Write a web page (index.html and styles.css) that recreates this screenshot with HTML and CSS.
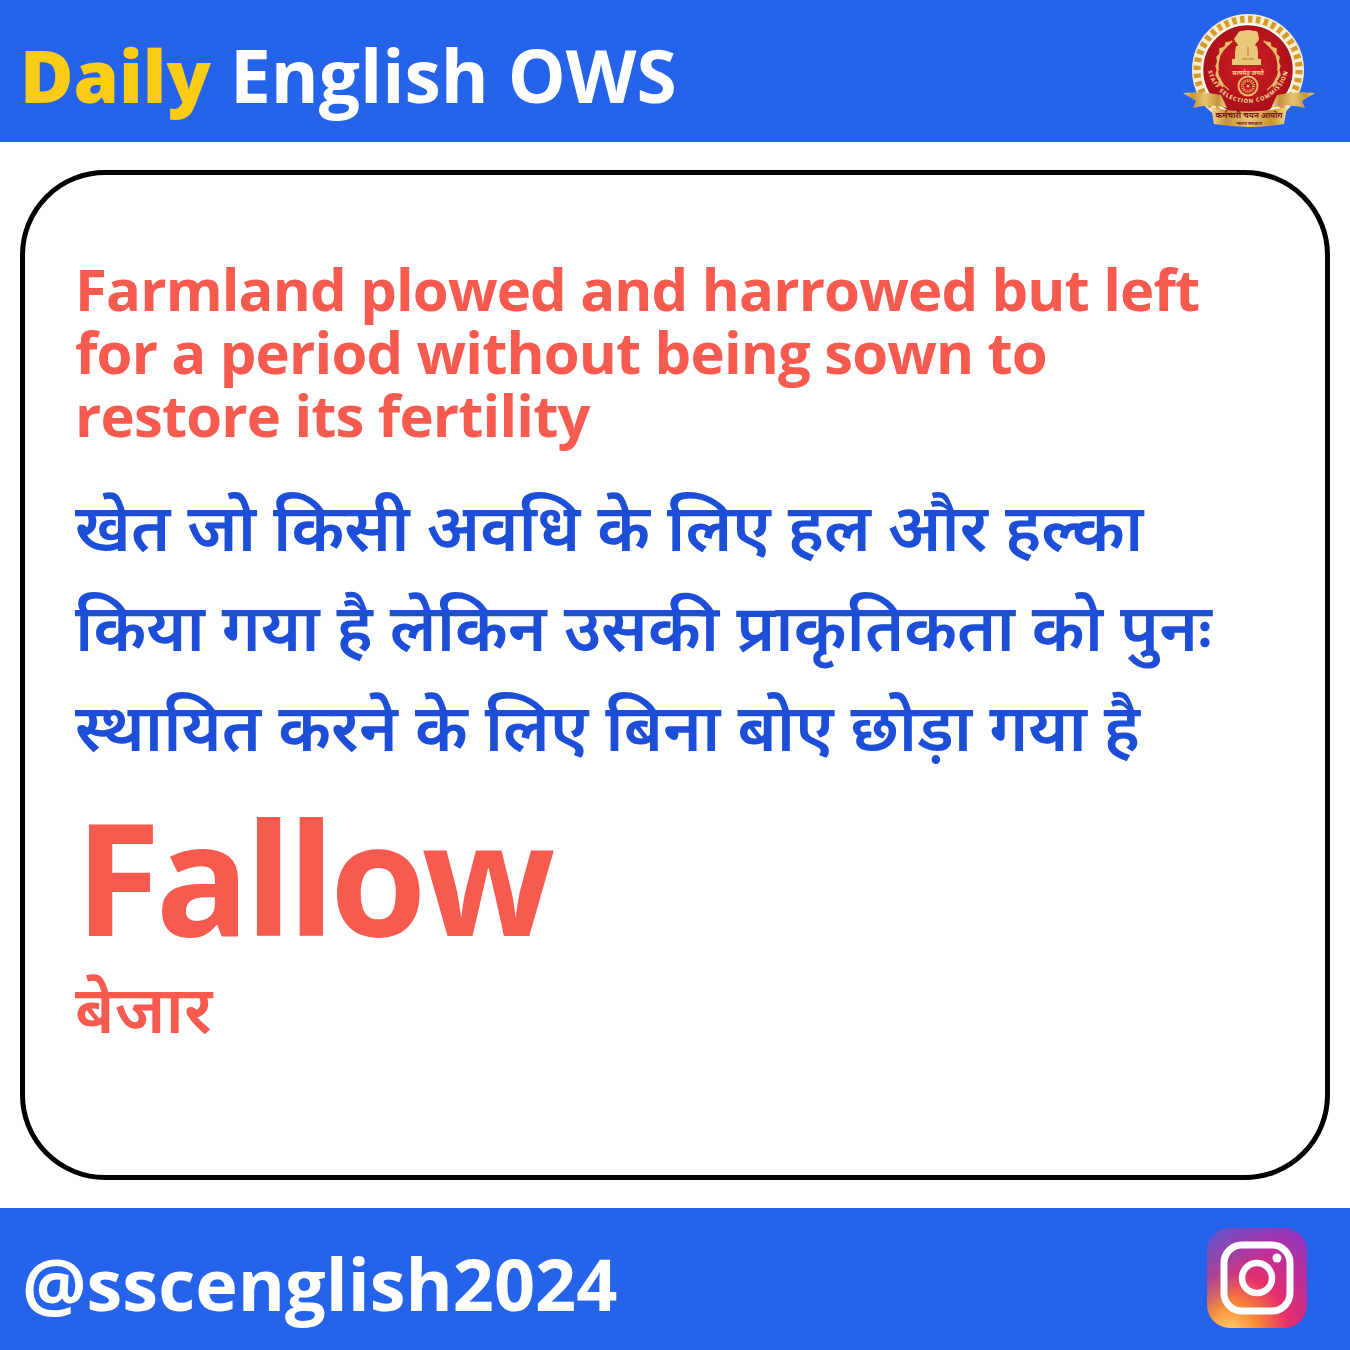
FILE: index.html
```html
<!DOCTYPE html>
<html>
<head>
  <title>Daily English OWS</title>
  <link rel="stylesheet" href="styles.css">
</head>
<body>
  <div class="page">
    <div class="bar top-bar">
      <div class="heading"><span class="yellow">Daily</span> English OWS</div>
      <svg class="emblem" viewBox="0 0 160 142" width="160" height="142">
        <defs>
          <linearGradient id="ribbonGold" x1="0" y1="0" x2="1" y2="0">
            <stop offset="0" stop-color="#f3d88e"/>
            <stop offset="0.2" stop-color="#c4933a"/>
            <stop offset="0.5" stop-color="#e6c474"/>
            <stop offset="0.8" stop-color="#c4933a"/>
            <stop offset="1" stop-color="#f3d88e"/>
          </linearGradient>
          <radialGradient id="discRed" cx="0.5" cy="0.45" r="0.55">
            <stop offset="0" stop-color="#d01f26"/>
            <stop offset="1" stop-color="#a80f18"/>
          </radialGradient>
          <path id="textArc" d="M 37 62 A 41 41 0 0 0 119 62" fill="none"/>
        </defs>
        <!-- anneau blanc et triangles dores -->
        <circle cx="78" cy="70" r="56" fill="#f8eecf"/>
        <circle cx="78" cy="70" r="51" fill="none" stroke="#d59a2c" stroke-width="7" stroke-dasharray="4.4 3.6"/>
        <circle cx="78" cy="70" r="45.5" fill="url(#discRed)" stroke="#fff" stroke-width="1.5"/>
        <!-- chapiteau -->
        <path d="M68 33q2-3 5-2q5-2 10 0q3-1 5 2l1 6q-1 3-3 4l-1 3h2l1 6v7h3v6h-29v-6h3v-7l1-6h2l-1-3q-2-1-3-4z" fill="#e9c878"/>
        <path d="M72 59h12M78 47v9" stroke="#a87a2c" stroke-width="1"/>
        <text class="motto" x="78" y="75" text-anchor="middle">सत्यमेव जयते</text>
        <!-- couronne -->
        <path d="M62 41q-15 10-15 26q0 14 12 23M94 41q15 10 15 26q0 14-12 23" fill="none" stroke="#e3bd68" stroke-width="1.2"/>
        <path d="M61 42l-5 1-1 5zM55 47l-5 2 0 6zM50 54l-3 3 1 6zM48 62l-2 4 2 5zM47 71l-1 4 3 5zM50 79l-1 4 4 4z" fill="#e3bd68" stroke="#e3bd68" stroke-width="1.5"/>
        <path d="M95 42l5 1 1 5zM101 47l5 2 0 6zM106 54l3 3-1 6zM108 62l2 4-2 5zM109 71l1 4-3 5zM106 79l1 4-4 4z" fill="#e3bd68" stroke="#e3bd68" stroke-width="1.5"/>
        <!-- roue -->
        <circle cx="78" cy="86" r="9.5" fill="#c3161e" stroke="#e3bd68" stroke-width="2"/>
        <circle cx="78" cy="86" r="5.5" fill="none" stroke="#e3bd68" stroke-width="3" stroke-dasharray="1 1"/>
        <circle cx="78" cy="86" r="1.5" fill="#e3bd68"/>
        <text class="arc-text"><textPath href="#textArc" startOffset="50%" text-anchor="middle">STAFF SELECTION COMMISSION</textPath></text>
        <!-- ruban -->
        <path d="M13 93q20-2 38 2l6 13q-18-5-34 0l3-7z" fill="url(#ribbonGold)"/>
        <path d="M145 93q-20-2-38 2l-6 13q18-5 34 0l-3-7z" fill="url(#ribbonGold)"/>
        <path d="M41 107q38 9 76 0l-3 17q-35 6-70 0z" fill="url(#ribbonGold)"/>
        <text class="ribbon-big" x="79" y="118" text-anchor="middle">कर्मचारी चयन आयोग</text>
        <text class="ribbon-small" x="79" y="124.5" text-anchor="middle">भारत सरकार</text>
      </svg>
    </div>

    <div class="main">
      <div class="card">
        <p class="meaning-en">Farmland plowed and harrowed but left for a period without being sown to restore its fertility</p>
        <p class="meaning-hi">खेत जो किसी अवधि के लिए हल और हल्का किया गया है लेकिन उसकी प्राकृतिकता को पुनः स्थायित करने के लिए बिना बोए छोड़ा गया है</p>
        <div class="word">Fallow</div>
        <div class="word-hi">बेजार</div>
      </div>
    </div>

    <div class="bar bottom-bar">
      <div class="handle">@sscenglish2024</div>
      <svg class="insta" viewBox="0 0 100 100" width="100" height="100">
        <defs>
          <radialGradient id="instaGrad" cx="0.22" cy="1.05" r="1.15">
            <stop offset="0" stop-color="#fed373"/>
            <stop offset="0.25" stop-color="#f98a35"/>
            <stop offset="0.52" stop-color="#e52e6c"/>
            <stop offset="0.78" stop-color="#c02d98"/>
            <stop offset="1" stop-color="#9a35b8"/>
          </radialGradient>
          <linearGradient id="instaTop" x1="0" y1="0" x2="0.5" y2="0.4">
            <stop offset="0" stop-color="#4a62d8" stop-opacity="0.8"/>
            <stop offset="1" stop-color="#4a62d8" stop-opacity="0"/>
          </linearGradient>
        </defs>
        <rect width="100" height="100" rx="23" fill="url(#instaGrad)"/>
        <rect width="100" height="100" rx="23" fill="url(#instaTop)"/>
        <rect x="17" y="17" width="66" height="66" rx="18" fill="none" stroke="#fff" stroke-width="7"/>
        <circle cx="50" cy="50" r="15" fill="none" stroke="#fff" stroke-width="6.5"/>
        <circle cx="70" cy="30" r="4.5" fill="#fff"/>
      </svg>
    </div>
  </div>
</body>
</html>
```
FILE: styles.css
```css
body {
  margin: 0;
  background-color: #fff;
  font-family: "Open Sans", "Noto Sans", "DejaVu Sans", sans-serif;
}

.page {
  width: 1350px;
  height: 1350px;
  display: flex;
  flex-direction: column;
}

.bar {
  height: 142px;
  flex: none;
  display: flex;
  justify-content: space-between;
  align-items: center;
  background-color: #2563eb;
  color: #fff;
  font-weight: 700;
  padding: 0 20px 0 22px;
}

.heading {
  font-size: 73px;
  margin: 7px 0 0 -2px;
}

.yellow {
  color: #facc15;
  font-weight: 800;
}

.handle {
  font-size: 72px;
  margin-top: 7px;
}

.insta {
  margin-right: 23px;
  margin-top: -2px;
}

/* textes du logo */
.motto {
  font-size: 6px;
  fill: #f3d88e;
}

.arc-text {
  font-size: 5.6px;
  font-weight: 700;
  fill: #f6e0a2;
  letter-spacing: 0.9px;
}

.ribbon-big {
  font-size: 8px;
  font-weight: 700;
  fill: #7a1a12;
}

.ribbon-small {
  font-size: 5px;
  fill: #7a1a12;
}

.main {
  flex: 1;
  padding: 28px 20px;
  display: flex;
}

.card {
  flex: 1;
  box-sizing: border-box;
  border: 5px solid #000;
  border-radius: 85px;
  padding: 82px 50px 0 50px;
}

.meaning-en {
  margin: 0;
  max-width: 1140px;
  color: #f75a4f;
  font-size: 58px;
  font-weight: 700;
  line-height: 63px;
  letter-spacing: -0.85px;
}

.meaning-hi {
  margin: 30px 0 0;
  max-width: 1160px;
  color: #1d4ed8;
  font-size: 65.5px;
  font-weight: 600;
  line-height: 100px;
}

.word {
  color: #f75a4f;
  font-size: 156px;
  font-weight: 700;
  line-height: 190px;
  letter-spacing: -5px;
  margin-top: 5px;
}

.word-hi {
  color: #f75a4f;
  font-size: 66px;
  font-weight: 600;
  line-height: 72px;
}
```
